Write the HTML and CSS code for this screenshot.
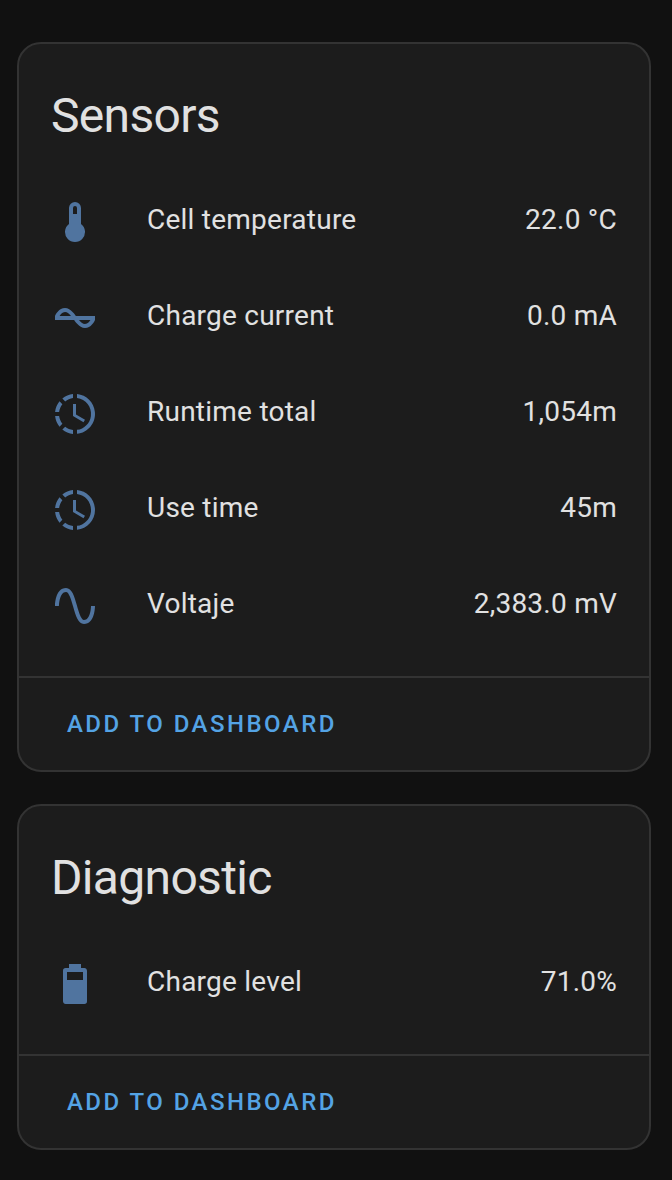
FILE: index.html
```html
<!DOCTYPE html>
<html lang="en">
<head>
    <meta charset="UTF-8">
    <meta name="viewport" content="width=device-width, initial-scale=1.0">
    <title>Device</title>
    <link rel="stylesheet" href="styles.css">
</head>
<body>

<div class="card">
    <h1 class="card-header">Sensors</h1>
    <div class="card-content">
        <div class="row">
            <svg class="icon" viewBox="0 0 24 24"><path d="M15 13V5A3 3 0 0 0 9 5V13A5 5 0 1 0 15 13M12 4A1 1 0 0 1 13 5V8H11V5A1 1 0 0 1 12 4Z"/></svg>
            <span class="name">Cell temperature</span>
            <span class="state">22.0 °C</span>
        </div>
        <div class="row">
            <svg class="icon" viewBox="0 0 24 24"><path d="M12.43 11C12.28 10.84 10 7 7 7S2.32 10.18 2 11V13H11.57C11.72 13.16 14 17 17 17S21.68 13.82 22 13V11H12.43M7 9C8.17 9 9.18 9.85 10 11H4.31C4.78 10.17 5.54 9 7 9M17 15C15.83 15 14.82 14.15 14 13H19.69C19.22 13.83 18.46 15 17 15Z"/></svg>
            <span class="name">Charge current</span>
            <span class="state">0.0 mA</span>
        </div>
        <div class="row">
            <svg class="icon" viewBox="0 0 24 24"><path d="M13,2.03V2.05L13,4.05C17.39,4.59 20.5,8.58 19.96,12.97C19.5,16.61 16.64,19.5 13,19.93V21.93C18.5,21.38 22.5,16.5 21.95,11C21.5,6.25 17.73,2.5 13,2.03M11,2.06C9.05,2.25 7.19,3 5.67,4.26L7.1,5.74C8.22,4.84 9.57,4.26 11,4.06V2.06M4.26,5.67C3,7.19 2.25,9.04 2.05,11H4.05C4.24,9.58 4.8,8.23 5.69,7.1L4.26,5.67M2.06,13C2.26,14.96 3.03,16.81 4.27,18.33L5.69,16.9C4.81,15.77 4.24,14.42 4.06,13H2.06M7.1,18.37L5.67,19.74C7.18,21 9.04,21.79 11,22V20C9.58,19.82 8.23,19.25 7.1,18.37M12.5,7V12.25L17,14.92L16.25,16.15L11,13V7H12.5Z"/></svg>
            <span class="name">Runtime total</span>
            <span class="state">1,054m</span>
        </div>
        <div class="row">
            <svg class="icon" viewBox="0 0 24 24"><path d="M13,2.03V2.05L13,4.05C17.39,4.59 20.5,8.58 19.96,12.97C19.5,16.61 16.64,19.5 13,19.93V21.93C18.5,21.38 22.5,16.5 21.95,11C21.5,6.25 17.73,2.5 13,2.03M11,2.06C9.05,2.25 7.19,3 5.67,4.26L7.1,5.74C8.22,4.84 9.57,4.26 11,4.06V2.06M4.26,5.67C3,7.19 2.25,9.04 2.05,11H4.05C4.24,9.58 4.8,8.23 5.69,7.1L4.26,5.67M2.06,13C2.26,14.96 3.03,16.81 4.27,18.33L5.69,16.9C4.81,15.77 4.24,14.42 4.06,13H2.06M7.1,18.37L5.67,19.74C7.18,21 9.04,21.79 11,22V20C9.58,19.82 8.23,19.25 7.1,18.37M12.5,7V12.25L17,14.92L16.25,16.15L11,13V7H12.5Z"/></svg>
            <span class="name">Use time</span>
            <span class="state">45m</span>
        </div>
        <div class="row">
            <svg class="icon" viewBox="0 0 24 24"><path d="M16.5,21C13.5,21 12.31,16.76 11.05,12.28C10.14,9.04 9,5 7.5,5C4.11,5 4,11.93 4,12H2C2,11.63 2.06,3 7.5,3C10.5,3 11.71,7.25 12.97,11.74C13.83,14.8 15,19 16.5,19C19.94,19 20.03,12.07 20,12H22C22,12.37 21.94,21 16.5,21Z"/></svg>
            <span class="name">Voltaje</span>
            <span class="state">2,383.0 mV</span>
        </div>
    </div>
    <div class="card-actions">
        <button class="add-button">Add to dashboard</button>
    </div>
</div>

<div class="card">
    <h1 class="card-header">Diagnostic</h1>
    <div class="card-content">
        <div class="row">
            <svg class="icon" viewBox="0 0 24 24"><path d="M16,10H8V6H16M16.67,4H15V2H9V4H7.33A1.33,1.33 0 0,0 6,5.33V20.67C6,21.4 6.6,22 7.33,22H16.67A1.33,1.33 0 0,0 18,20.67V5.33C18,4.6 17.4,4 16.67,4Z"/></svg>
            <span class="name">Charge level</span>
            <span class="state">71.0%</span>
        </div>
    </div>
    <div class="card-actions">
        <button class="add-button">Add to dashboard</button>
    </div>
</div>

</body>
</html>
```

FILE: styles.css
```css
* {
    box-sizing: border-box;
}
body {
    margin: 0;
    padding: 42px 21px 30px 17px;
    background-color: #111111;
    color: #e1e1e1;
    font-family: Roboto, "Noto Sans", sans-serif;
    font-size: 28px;
}
.card {
    background-color: #1c1c1c;
    border: 2px solid #333333;
    border-radius: 24px;
}
.card + .card {
    margin-top: 32px;
}
.card-header {
    margin: 0;
    padding: 24px 32px 18px;
    font-size: 48px;
    font-weight: 400;
    line-height: 96px;
    letter-spacing: -0.014em;
}
.card-content {
    display: flex;
    flex-direction: column;
    gap: 16px;
    padding: 0 32px 30px;
}
.row {
    display: flex;
    align-items: center;
    height: 80px;
}
.icon {
    width: 48px;
    height: 48px;
    fill: #50749f;
}
.name {
    flex: 1;
    margin-left: 48px;
}
.name,
.state {
    padding-bottom: 4px;
    line-height: 40px;
    letter-spacing: 0.24px;
}
.card-actions {
    display: flex;
    align-items: center;
    height: 94px;
    padding: 0 32px;
    border-top: 2px solid #333333;
}
.add-button {
    padding: 0 16px;
    background: none;
    border: none;
    color: #54a3e4;
    font-family: inherit;
    font-size: 24px;
    font-weight: 500;
    line-height: 32px;
    letter-spacing: 2.46px;
    text-transform: uppercase;
    cursor: pointer;
}
```
